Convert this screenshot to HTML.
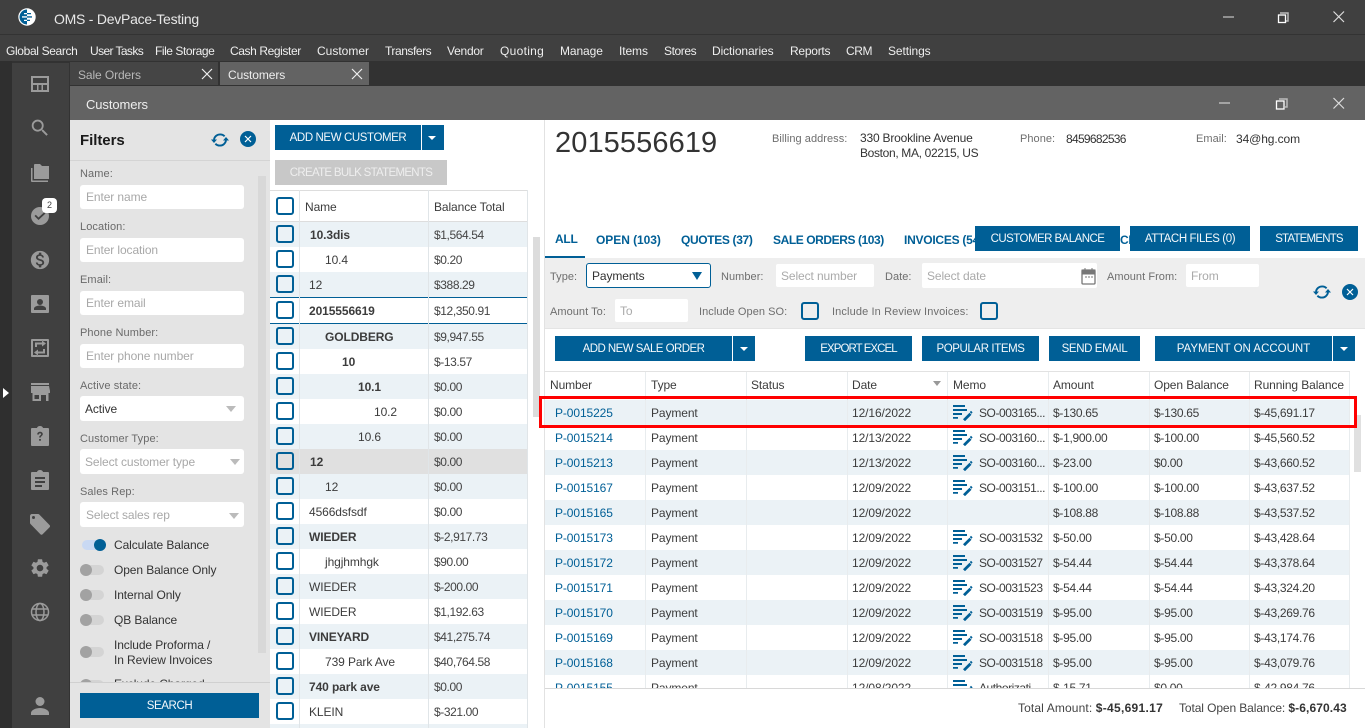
<!DOCTYPE html>
<html><head><meta charset="utf-8"><title>OMS</title>
<style>
html,body{margin:0;padding:0}
body{width:1365px;height:728px;overflow:hidden;position:relative;background:#fff;font:12px/16px "Liberation Sans",sans-serif;color:#333;letter-spacing:-.1px}
div,span,svg{position:absolute;white-space:nowrap;box-sizing:border-box}
b span,span span{position:static}
.m{top:43px;color:#eee;font-size:12px}
.btn{background:#005f96;color:#f4f8fb;text-align:center;height:25px;line-height:27px;font-size:11.5px;letter-spacing:-.4px}
.lb{left:80px;color:#6a6a6a;font-size:11px;letter-spacing:.1px}
.in{left:80px;width:164px;height:24px;background:#fff;border-radius:3px;color:#a8a8a8;line-height:24px;padding-left:6px;font-size:12px}
.tg{left:80px;width:24px;height:10px;border-radius:5px;background:#d4d4d4}
.tg i{position:absolute;left:0;top:-1px;width:12px;height:12px;border-radius:50%;background:#a2a2a2}
.tl{left:114px;color:#333}
.ar{width:0;height:0;border-left:5px solid transparent;border-right:5px solid transparent;border-top:6px solid #bbb}
.cb{left:6px;top:3px;width:18px;height:18px;border:2px solid #005f96;border-radius:3px;background:transparent}
.r{left:0;width:258px;height:25px}
.t{background:#ebf2f6}
.n{top:5px;color:#3c3c3c}
.bal{left:164px;top:5px;color:#444;letter-spacing:-.4px}
.R{left:0;width:804px;height:25px}
.R span{top:5px;color:#3c3c3c}
.R .a{left:10px;color:#005f96}.R .b{left:106px}.R .d{left:307px}.R .e{left:434px;letter-spacing:-.45px}.R .f{left:508px;letter-spacing:-.3px}.R .g{left:609px;letter-spacing:-.3px}.R .h{left:709px;letter-spacing:-.3px}
.R svg{left:408px;top:5px}
.v{top:0;width:1px;height:288px;background:#e8ecee}
.hd{top:377px;color:#3c3c3c}
.tab{top:232px;color:#005f96;font-weight:bold;font-size:12px;letter-spacing:-.25px}
.gl{color:#6e6e6e;font-size:11px;letter-spacing:.05px}
.gi{background:#fff;color:#aaa;height:23px;line-height:25px;padding-left:5px;border-radius:2px}
.ic{left:29px;width:22px;height:22px;fill:#9b9b9b}
</style></head><body>
<svg width="0" height="0" style="position:absolute"><defs>
<symbol id="memo" viewBox="0 0 20 16"><path fill="#005f96" d="M0 0h12v2H0zM0 4h14v2H0zM0 8h9v2H0zM0 12h5v1.800H0z"/><path stroke="#005f96" stroke-width="2.800" fill="none" d="M11 15.200l6.500-6.500"/><path fill="#005f96" d="M18 5.800l1.600 1.600-1.200 1.300-1.600-1.600z"/></symbol>
<symbol id="ref" viewBox="0 0 18 18"><path fill="none" stroke="#005f96" stroke-width="1.900" d="M3 8.500C3.600 5.400 6.200 3.400 9.200 3.400c1.800 0 3.300.7 4.400 1.900M15 9.500c-.6 3.100-3.200 5.100-6.200 5.100-1.800 0-3.300-.7-4.400-1.900"/><path fill="#005f96" d="M0 8.500h6L3 12zM12 9.500h6L15 6z"/></symbol>
</defs></svg>

<!-- title + menu -->
<div style="left:0;top:0;width:1365px;height:61px;background:#404040"></div>
<div style="left:0;top:34px;width:1365px;height:1px;background:#333"></div>
<svg style="left:18px;top:8px" width="18" height="18" viewBox="0 0 18 18"><circle cx="9" cy="9" r="8.700" fill="#fff"/><path d="M9 1.500A7.500 7.500 0 0 0 9 16.500z" fill="#005f96"/><path d="M7 5h6v1.300H7zM5 8.300h9v1.300H5zM7 11.700h5V13H7z" fill="#005f96"/><path d="M6 5h3v1.300H6zM4 8.300h5v1.300H4zM6 11.700h3V13H6z" fill="#fff"/></svg>
<div style="left:54px;top:11px;color:#e8e8e8;font-size:14px;letter-spacing:-.25px">OMS - DevPace-Testing</div>
<div class="m" style="left:6px;letter-spacing:-.35px">Global Search</div><div class="m" style="left:90px;letter-spacing:-.6px">User Tasks</div><div class="m" style="left:155px;letter-spacing:-.45px">File Storage</div><div class="m" style="left:230px;letter-spacing:-.4px">Cash Register</div><div class="m" style="left:317px;letter-spacing:0">Customer</div><div class="m" style="left:385px;letter-spacing:-.45px">Transfers</div><div class="m" style="left:447px;letter-spacing:-.25px">Vendor</div><div class="m" style="left:500px;letter-spacing:.3px">Quoting</div><div class="m" style="left:560px">Manage</div><div class="m" style="left:619px">Items</div><div class="m" style="left:664px;letter-spacing:-.4px">Stores</div><div class="m" style="left:712px">Dictionaries</div><div class="m" style="left:790px;letter-spacing:-.25px">Reports</div><div class="m" style="left:846px;letter-spacing:-.4px">CRM</div><div class="m" style="left:888px">Settings</div>
<svg style="left:1220px;top:8px" width="145" height="20" fill="none"><path d="M3 9h11" stroke="#aaa" stroke-width="1.500"/><path d="M60 5h8v8h-2" stroke="#bbb" stroke-width="1.500"/><rect x="58.500" y="7" width="7" height="7.500" stroke="#fff" stroke-width="1.300"/><path d="M113.500 3.500l10.500 10.500M124 3.500l-10.500 10.500" stroke="#ddd" stroke-width="1.200"/></svg>

<!-- strip -->
<div style="left:0;top:61px;width:1365px;height:25px;background:#323232"></div>
<div style="left:70px;top:62px;width:148px;height:23px;background:#454545"></div>
<div style="left:78px;top:67px;color:#b8b8b8">Sale Orders</div>
<svg style="left:201px;top:68px" width="12" height="12"><path d="M1 1l10 10M11 1L1 11" stroke="#eee" stroke-width="1.200"/></svg>
<div style="left:220px;top:62px;width:149px;height:23px;background:#636363"></div>
<div style="left:228px;top:67px;color:#eee">Customers</div>
<svg style="left:351px;top:68px" width="12" height="12"><path d="M1 1l10 10M11 1L1 11" stroke="#eee" stroke-width="1.200"/></svg>

<!-- sidebar -->
<div style="left:0;top:61px;width:12px;height:667px;background:#2f2f2f"></div>
<div style="left:12px;top:63px;width:58px;height:665px;background:#404040"></div>
<div style="left:69px;top:63px;width:1px;height:665px;background:#333"></div>
<div style="left:3px;top:388px;width:0;height:0;border-left:6px solid #fff;border-top:5px solid transparent;border-bottom:5px solid transparent"></div>
<svg class="ic" style="top:73px" viewBox="0 0 22 22"><path fill-rule="evenodd" d="M2 3h18v16H2zM4 5v5h14V5zM4 12v5h4v-5zM9.500 12v5h3v-5zM14 12v5h4v-5z"/></svg>
<svg class="ic" style="top:116px" viewBox="0 0 24 24"><path d="M15.500 14h-.79l-.28-.27A6.471 6.471 0 0 0 16 9.500 6.500 6.500 0 1 0 9.500 16c1.610 0 3.090-.59 4.230-1.570l.27.28v.79l5 4.990L20.490 19l-4.990-5zm-6 0C7.010 14 5 11.990 5 9.500S7.010 5 9.500 5 14 7.010 14 9.500 11.990 14 9.500 14z" transform="translate(0 1)"/></svg>
<svg class="ic" style="top:161px" viewBox="0 0 22 22"><path d="M6 3h5l2 2h7v13H5V4c0-.6.400-1 1-1z"/><path d="M2 7h1.500v12.500H19V21H3c-.6 0-1-.4-1-1z"/></svg>
<svg class="ic" style="top:205px" viewBox="0 0 22 22"><path fill-rule="evenodd" d="M11 2a9 9 0 1 1 0 18 9 9 0 0 1 0-18zM5.500 11l4 4 7-6.500-1.300-1.200-5.700 5.200L6.800 9.800z"/></svg>
<svg class="ic" style="top:249px" viewBox="0 0 24 24"><path d="M12 2C6.480 2 2 6.480 2 12s4.480 10 10 10 10-4.480 10-10S17.520 2 12 2zm1.410 16.090V20h-2.670v-1.930c-1.710-.36-3.160-1.460-3.270-3.400h1.960c.1 1.050.82 1.870 2.650 1.870 1.960 0 2.400-.98 2.400-1.590 0-.83-.44-1.610-2.670-2.140-2.480-.6-4.180-1.620-4.180-3.670 0-1.720 1.390-2.840 3.110-3.210V4h2.670v1.950c1.860.45 2.790 1.860 2.870 3.390H14.300c-.05-1.110-.64-1.870-2.220-1.870-1.500 0-2.400.68-2.400 1.640 0 .84.650 1.390 2.670 1.910s4.180 1.390 4.180 3.910c-.01 1.830-1.380 2.830-3.120 3.160z"/></svg>
<svg class="ic" style="top:293px" viewBox="0 0 22 22"><path fill-rule="evenodd" d="M3 2h16c.6 0 1 .4 1 1v16c0 .6-.4 1-1 1H3c-.6 0-1-.4-1-1V3c0-.6.400-1 1-1zm8 4a3 3 0 1 0 0 6 3 3 0 0 0 0-6zm-6 11h12v-1.500c0-2-4-3-6-3s-6 1-6 3z"/></svg>
<svg class="ic" style="top:337px" viewBox="0 0 22 22"><path fill-rule="evenodd" d="M3 2h16c.6 0 1 .4 1 1v16c0 .6-.4 1-1 1H3c-.6 0-1-.4-1-1V3c0-.6.400-1 1-1zm1 2v14h14V4zM6 5.500h7V3.500l4 3-4 3v-2H8V10H6zM16 16.500H9v2l-4-3 4-3v2h5V12h2z"/></svg>
<svg class="ic" style="top:381px" viewBox="0 0 22 22"><path fill-rule="evenodd" d="M2 2h18v2H2zM2 5h18l1 5v2h-1.500v8H17v-6h-5v6H3.500v-8H2v-2zM5.500 14v4H10v-4z"/></svg>
<svg class="ic" style="top:425px" viewBox="0 0 22 22"><path fill-rule="evenodd" d="M3 3h5c.3-1.200 1.500-2 3-2s2.700.8 3 2h5c.6 0 1 .4 1 1v16c0 .6-.4 1-1 1H3c-.6 0-1-.4-1-1V4c0-.6.400-1 1-1zm5.200 6.500h1.700c0-.8.500-1.300 1.100-1.300s1.100.4 1.100 1c0 1.200-2 1.200-2 3.300h1.700c0-1.500 2-1.800 2-3.400 0-1.500-1.200-2.400-2.800-2.400s-2.800 1.100-2.800 2.800zM10.100 14v1.800h1.800V14z"/></svg>
<svg class="ic" style="top:469px" viewBox="0 0 22 22"><path fill-rule="evenodd" d="M3 3h5c.3-1.200 1.500-2 3-2s2.700.8 3 2h5c.6 0 1 .4 1 1v16c0 .6-.4 1-1 1H3c-.6 0-1-.4-1-1V4c0-.6.400-1 1-1zm3 5v2h10V8zm0 4v2h10v-2zm0 4v2h7v-2z"/></svg>
<svg class="ic" style="top:513px" viewBox="0 0 22 22"><path fill-rule="evenodd" d="M1 3c0-1 .8-2 2-2h6c.5 0 1 .2 1.400.6l10.200 10.500c.6.600.6 1.600 0 2.200l-7 7c-.6.600-1.600.6-2.200 0L1.500 11c-.3-.3-.5-.8-.5-1.300zm3.500 0a1.500 1.500 0 1 0 0 3 1.500 1.500 0 0 0 0-3z"/></svg>
<svg class="ic" style="top:557px" viewBox="0 0 24 24"><path d="M19.140 12.940c.04-.3.060-.61.060-.94 0-.32-.02-.64-.07-.94l2.030-1.580c.18-.14.23-.41.120-.61l-1.920-3.320c-.12-.22-.37-.29-.59-.22l-2.390.96c-.5-.38-1.030-.7-1.620-.94l-.36-2.540c-.04-.24-.24-.41-.48-.41h-3.840c-.24 0-.43.17-.47.41l-.36 2.540c-.59.24-1.130.57-1.620.94l-2.390-.96c-.22-.08-.47 0-.59.22L2.740 8.870c-.12.21-.08.47.12.61l2.030 1.580c-.05.3-.09.63-.09.94s.02.64.07.94l-2.030 1.580c-.18.14-.23.41-.12.61l1.920 3.320c.12.22.37.29.59.22l2.390-.96c.5.38 1.030.7 1.620.94l.36 2.540c.05.24.24.41.48.41h3.840c.24 0 .44-.17.47-.41l.36-2.540c.59-.24 1.130-.56 1.620-.94l2.390.96c.22.08.47 0 .59-.22l1.920-3.320c.12-.22.07-.47-.12-.61l-2.010-1.580zM12 15.600c-1.980 0-3.600-1.620-3.600-3.600s1.620-3.600 3.600-3.600 3.600 1.620 3.600 3.600-1.620 3.600-3.600 3.600z"/></svg>
<svg class="ic" style="top:601px;fill:none;stroke:#9b9b9b;stroke-width:1.500" viewBox="0 0 22 22"><circle cx="11" cy="11" r="8.500"/><ellipse cx="11" cy="11" rx="4" ry="8.500"/><path d="M3 8h16M3 14h16"/></svg>
<svg class="ic" style="top:695px" viewBox="0 0 22 22"><circle cx="11" cy="6.500" r="4.500"/><path d="M2 20v-2c0-3 5-5 9-5s9 2 9 5v2z"/></svg>
<div style="left:42px;top:198px;width:15px;height:15px;background:#fff;border-radius:4px;color:#444;font-size:9px;line-height:15px;text-align:center">2</div>

<!-- panel title -->
<div style="left:70px;top:86px;width:1295px;height:34px;background:#636363"></div>
<div style="left:86px;top:97px;color:#eee;font-size:13px">Customers</div>
<svg style="left:1216px;top:96px" width="149" height="16" fill="none"><path d="M3 7h11" stroke="#bbb" stroke-width="1.500"/><path d="M63 3h8v8h-2" stroke="#bbb" stroke-width="1.500"/><rect x="60.500" y="5" width="7.500" height="8" stroke="#fff" stroke-width="1.300"/><path d="M117.500 2l10.500 10.500M128 2l-10.500 10.500" stroke="#ddd" stroke-width="1.200"/></svg>

<!-- filters -->
<div style="left:70px;top:120px;width:200px;height:608px;background:#e4e4e4"></div>
<div style="left:70px;top:160px;width:200px;height:1px;background:#d4d4d4"></div>
<div style="left:80px;top:133px;font-size:15px;font-weight:bold;color:#1a1a1a;letter-spacing:-.05px">Filters</div>
<svg style="left:211px;top:131px" width="18" height="18"><use href="#ref"/></svg>
<div style="left:240px;top:131px;width:16px;height:16px;border-radius:50%;background:#005f96"></div>
<svg style="left:244px;top:135px" width="8" height="8"><path d="M1 1l6 6M7 1L1 7" stroke="#fff" stroke-width="1.200"/></svg>
<div style="left:258px;top:176px;width:8px;height:477px;background:#d8d8d8"></div>
<div class="lb" style="top:166px">Name:</div><div class="in" style="top:185px">Enter name</div>
<div class="lb" style="top:219px">Location:</div><div class="in" style="top:238px">Enter location</div>
<div class="lb" style="top:272px">Email:</div><div class="in" style="top:291px">Enter email</div>
<div class="lb" style="top:325px">Phone Number:</div><div class="in" style="top:344px">Enter phone number</div>
<div class="lb" style="top:378px">Active state:</div><div class="in" style="top:396px;height:25px;line-height:27px;color:#333;padding-left:5px">Active</div><div class="ar" style="left:226px;top:406px"></div>
<div class="lb" style="top:431px">Customer Type:</div><div class="in" style="top:449px;height:25px;line-height:27px;padding-left:5px">Select customer type</div><div class="ar" style="left:230px;top:459px"></div>
<div class="lb" style="top:484px">Sales Rep:</div><div class="in" style="top:502px;height:25px;line-height:27px">Select sales rep</div><div class="ar" style="left:229px;top:513px"></div>
<div class="tg" style="top:540px;left:82px;background:#c9d9f3"><i style="left:12px;background:#005f96"></i></div><div class="tl" style="top:537px">Calculate Balance</div>
<div class="tg" style="top:565px"><i></i></div><div class="tl" style="top:562px">Open Balance Only</div>
<div class="tg" style="top:590px"><i></i></div><div class="tl" style="top:587px">Internal Only</div>
<div class="tg" style="top:615px"><i></i></div><div class="tl" style="top:612px">QB Balance</div>
<div class="tg" style="top:647px"><i></i></div><div class="tl" style="top:638px;line-height:15px">Include Proforma /<br>In Review Invoices</div>
<div class="tg" style="top:680px"><i></i></div><div class="tl" style="top:676px">Exclude Charged</div>
<div style="left:70px;top:682px;width:200px;height:46px;background:#e4e4e4;border-top:1px solid #d0d0d0"></div>
<div class="btn" style="left:80px;top:693px;width:179px">SEARCH</div>

<!-- middle -->
<div style="left:270px;top:120px;width:275px;height:608px;background:#fff"></div>
<div style="left:544px;top:120px;width:1px;height:608px;background:#e2e2e2"></div>
<div class="btn" style="left:275px;top:125px;width:146px">ADD NEW CUSTOMER</div>
<div class="btn" style="left:422px;top:125px;width:22px"></div><div class="ar" style="left:428px;top:136px;border-top-color:#fff;border-width:4px 4px 0"></div>
<div class="btn" style="left:275px;top:160px;width:172px;background:#c8c8c8;color:#eee;letter-spacing:-.7px">CREATE BULK STATEMENTS</div>
<div style="left:270px;top:190px;width:258px;height:538px">
 <div style="left:0;top:0;width:258px;height:32px;border-top:1px solid #ddd;border-bottom:1px solid #ddd"></div>
 <div class="cb" style="top:7px"></div>
 <div class="n" style="left:35px;top:9px">Name</div><div class="n" style="left:164px;top:9px">Balance Total</div>
 <div class="r t" style="top:32px"><div class="cb"></div><span class="n" style="left:40px"><b>10.3dis</b></span><span class="bal">$1,564.54</span></div>
 <div class="r" style="top:57px"><div class="cb"></div><span class="n" style="left:55px">10.4</span><span class="bal">$0.20</span></div>
 <div class="r t" style="top:82px"><div class="cb"></div><span class="n" style="left:39px">12</span><span class="bal">$388.29</span></div>
 <div class="r" style="top:107px;height:27px;border-top:1px solid #005f96;border-bottom:1px solid #005f96"><div class="cb"></div><span class="n" style="left:39px"><b>2015556619</b></span><span class="bal">$12,350.91</span></div>
 <div class="r t" style="top:134px"><div class="cb"></div><span class="n" style="left:55px"><b>GOLDBERG</b></span><span class="bal">$9,947.55</span></div>
 <div class="r" style="top:159px"><div class="cb"></div><span class="n" style="left:72px"><b>10</b></span><span class="bal">$-13.57</span></div>
 <div class="r t" style="top:184px"><div class="cb"></div><span class="n" style="left:88px"><b>10.1</b></span><span class="bal">$0.00</span></div>
 <div class="r" style="top:209px"><div class="cb"></div><span class="n" style="left:104px">10.2</span><span class="bal">$0.00</span></div>
 <div class="r t" style="top:234px"><div class="cb"></div><span class="n" style="left:88px">10.6</span><span class="bal">$0.00</span></div>
 <div class="r" style="top:259px;background:#e0e0e0"><div class="cb"></div><span class="n" style="left:40px"><b>12</b></span><span class="bal">$0.00</span></div>
 <div class="r t" style="top:284px"><div class="cb"></div><span class="n" style="left:55px">12</span><span class="bal">$0.00</span></div>
 <div class="r" style="top:309px"><div class="cb"></div><span class="n" style="left:39px">4566dsfsdf</span><span class="bal">$0.00</span></div>
 <div class="r t" style="top:334px"><div class="cb"></div><span class="n" style="left:39px"><b>WIEDER</b></span><span class="bal">$-2,917.73</span></div>
 <div class="r" style="top:359px"><div class="cb"></div><span class="n" style="left:55px">jhgjhmhgk</span><span class="bal">$90.00</span></div>
 <div class="r t" style="top:384px"><div class="cb"></div><span class="n" style="left:39px">WIEDER</span><span class="bal">$-200.00</span></div>
 <div class="r" style="top:409px"><div class="cb"></div><span class="n" style="left:39px">WIEDER</span><span class="bal">$1,192.63</span></div>
 <div class="r t" style="top:434px"><div class="cb"></div><span class="n" style="left:39px"><b>VINEYARD</b></span><span class="bal">$41,275.74</span></div>
 <div class="r" style="top:459px"><div class="cb"></div><span class="n" style="left:55px">739 Park Ave</span><span class="bal">$40,764.58</span></div>
 <div class="r t" style="top:484px"><div class="cb"></div><span class="n" style="left:39px"><b>740 park ave</b></span><span class="bal">$0.00</span></div>
 <div class="r" style="top:509px"><div class="cb"></div><span class="n" style="left:39px">KLEIN</span><span class="bal">$-321.00</span></div>
 <div class="r t" style="top:534px;height:4px"></div>
 <div style="left:29px;top:0;width:1px;height:538px;background:#e0e5e8"></div>
 <div style="left:158px;top:0;width:1px;height:538px;background:#e0e5e8"></div>
 <div style="left:257px;top:0;width:1px;height:538px;background:#e0e5e8"></div>
</div>
<div style="left:533px;top:237px;width:7px;height:180px;background:#dcdcdc"></div>

<!-- right header -->
<div style="left:555px;top:125px;font-size:29px;line-height:36px;color:#333;letter-spacing:.1px">2015556619</div>
<div class="gl" style="left:772px;top:131px">Billing address:</div>
<div style="left:860px;top:131px;line-height:15px;color:#333;letter-spacing:-.2px">330 Brookline Avenue<br><span style="position:static;letter-spacing:-.34px">Boston, MA, 02215, US</span></div>
<div class="gl" style="left:1020px;top:131px">Phone:</div><div style="left:1066px;top:131px;letter-spacing:-.7px">8459682536</div>
<div class="gl" style="left:1196px;top:131px">Email:</div><div style="left:1236px;top:131px">34@hg.com</div>

<div class="tab" style="left:555px;top:231px">ALL</div><div class="tab" style="left:596px;letter-spacing:-.05px">OPEN (103)</div><div class="tab" style="left:681px;letter-spacing:-.35px">QUOTES (37)</div><div class="tab" style="left:773px;letter-spacing:-.42px">SALE ORDERS (103)</div><div class="tab" style="left:904px">INVOICES (54)</div><div class="tab" style="left:1120px">CI</div>
<div style="left:545px;top:256px;width:40px;height:2px;background:#005f96"></div>
<div class="btn" style="left:975px;top:226px;width:145px;letter-spacing:-.55px">CUSTOMER BALANCE</div>
<div class="btn" style="left:1130px;top:226px;width:120px">ATTACH FILES (0)</div>
<div class="btn" style="left:1260px;top:226px;width:98px;letter-spacing:-.8px">STATEMENTS</div>

<!-- filter bar -->
<div style="left:545px;top:258px;width:820px;height:71px;background:#eee;border-bottom:1px solid #e4e4e4"></div>
<div class="gl" style="left:550px;top:269px">Type:</div>
<div style="left:586px;top:263px;width:125px;height:25px;background:#fff;border:1px solid #005f96;border-radius:3px;padding-left:5px;line-height:25px;color:#333">Payments</div>
<div class="ar" style="left:692px;top:272px;border-top:8px solid #005f96"></div>
<div class="gl" style="left:721px;top:269px">Number:</div><div class="gi" style="left:776px;top:264px;width:98px">Select number</div>
<div class="gl" style="left:885px;top:269px">Date:</div><div class="gi" style="left:922px;top:263px;width:175px;height:25px;line-height:27px">Select date</div>
<svg style="left:1081px;top:267px" width="15" height="18" fill="none"><rect x="1" y="3" width="13" height="14" rx="1" stroke="#777" stroke-width="1.300"/><path d="M1 3h13v4H1zM4 1v3M11 1v3" fill="#777" stroke="#777"/><path d="M4 10h2M7 10h2M10 10h2" stroke="#777"/></svg>
<div class="gl" style="left:1107px;top:269px">Amount From:</div><div class="gi" style="left:1186px;top:264px;width:73px">From</div>
<div class="gl" style="left:550px;top:304px">Amount To:</div><div class="gi" style="left:615px;top:299px;width:73px">To</div>
<div class="gl" style="left:699px;top:304px">Include Open SO:</div><div class="cb" style="left:801px;top:302px"></div>
<div class="gl" style="left:832px;top:304px;letter-spacing:.12px">Include In Review Invoices:</div><div class="cb" style="left:980px;top:302px"></div>
<svg style="left:1313px;top:283px" width="18" height="18"><use href="#ref"/></svg>
<div style="left:1342px;top:284px;width:16px;height:16px;border-radius:50%;background:#005f96"></div>
<svg style="left:1346px;top:288px" width="8" height="8"><path d="M1 1l6 6M7 1L1 7" stroke="#fff" stroke-width="1.200"/></svg>

<!-- action buttons -->
<div class="btn" style="left:555px;top:336px;width:177px;letter-spacing:-.55px">ADD NEW SALE ORDER</div>
<div class="btn" style="left:733px;top:336px;width:22px"></div><div class="ar" style="left:740px;top:347px;border-top-color:#fff;border-width:4px 4px 0"></div>
<div class="btn" style="left:805px;top:336px;width:107px;letter-spacing:-.95px">EXPORT EXCEL</div>
<div class="btn" style="left:922px;top:336px;width:117px">POPULAR ITEMS</div>
<div class="btn" style="left:1049px;top:336px;width:91px">SEND EMAIL</div>
<div class="btn" style="left:1155px;top:336px;width:177px;letter-spacing:0">PAYMENT ON ACCOUNT</div>
<div class="btn" style="left:1333px;top:336px;width:22px"></div><div class="ar" style="left:1340px;top:347px;border-top-color:#fff;border-width:4px 4px 0"></div>

<!-- grid header -->
<div style="left:545px;top:371px;width:805px;height:1px;background:#e2e2e2"></div>
<div class="hd" style="left:550px">Number</div><div class="hd" style="left:651px">Type</div><div class="hd" style="left:751px">Status</div><div class="hd" style="left:852px">Date</div><div class="ar" style="left:933px;top:381px;border-width:5px 4.500px 0;border-top-color:#999"></div><div class="hd" style="left:953px">Memo</div><div class="hd" style="left:1053px">Amount</div><div class="hd" style="left:1154px">Open Balance</div><div class="hd" style="left:1254px">Running Balance</div>

<!-- grid -->
<div style="left:545px;top:400px;width:805px;height:288px;overflow:hidden">
<div class="R t" style="top:0"><span class="a">P-0015225</span><span class="b">Payment</span><span class="d">12/16/2022</span><svg width="20" height="16"><use href="#memo"/></svg><span class="e">SO-003165...</span><span class="f">$-130.65</span><span class="g">$-130.65</span><span class="h">$-45,691.17</span></div>
<div class="R" style="top:25px"><span class="a">P-0015214</span><span class="b">Payment</span><span class="d">12/13/2022</span><svg width="20" height="16"><use href="#memo"/></svg><span class="e">SO-003160...</span><span class="f">$-1,900.00</span><span class="g">$-100.00</span><span class="h">$-45,560.52</span></div>
<div class="R t" style="top:50px"><span class="a">P-0015213</span><span class="b">Payment</span><span class="d">12/13/2022</span><svg width="20" height="16"><use href="#memo"/></svg><span class="e">SO-003160...</span><span class="f">$-23.00</span><span class="g">$0.00</span><span class="h">$-43,660.52</span></div>
<div class="R" style="top:75px"><span class="a">P-0015167</span><span class="b">Payment</span><span class="d">12/09/2022</span><svg width="20" height="16"><use href="#memo"/></svg><span class="e">SO-003151...</span><span class="f">$-100.00</span><span class="g">$-100.00</span><span class="h">$-43,637.52</span></div>
<div class="R t" style="top:100px"><span class="a">P-0015165</span><span class="b">Payment</span><span class="d">12/09/2022</span><span class="f">$-108.88</span><span class="g">$-108.88</span><span class="h">$-43,537.52</span></div>
<div class="R" style="top:125px"><span class="a">P-0015173</span><span class="b">Payment</span><span class="d">12/09/2022</span><svg width="20" height="16"><use href="#memo"/></svg><span class="e">SO-0031532</span><span class="f">$-50.00</span><span class="g">$-50.00</span><span class="h">$-43,428.64</span></div>
<div class="R t" style="top:150px"><span class="a">P-0015172</span><span class="b">Payment</span><span class="d">12/09/2022</span><svg width="20" height="16"><use href="#memo"/></svg><span class="e">SO-0031527</span><span class="f">$-54.44</span><span class="g">$-54.44</span><span class="h">$-43,378.64</span></div>
<div class="R" style="top:175px"><span class="a">P-0015171</span><span class="b">Payment</span><span class="d">12/09/2022</span><svg width="20" height="16"><use href="#memo"/></svg><span class="e">SO-0031523</span><span class="f">$-54.44</span><span class="g">$-54.44</span><span class="h">$-43,324.20</span></div>
<div class="R t" style="top:200px"><span class="a">P-0015170</span><span class="b">Payment</span><span class="d">12/09/2022</span><svg width="20" height="16"><use href="#memo"/></svg><span class="e">SO-0031519</span><span class="f">$-95.00</span><span class="g">$-95.00</span><span class="h">$-43,269.76</span></div>
<div class="R" style="top:225px"><span class="a">P-0015169</span><span class="b">Payment</span><span class="d">12/09/2022</span><svg width="20" height="16"><use href="#memo"/></svg><span class="e">SO-0031518</span><span class="f">$-95.00</span><span class="g">$-95.00</span><span class="h">$-43,174.76</span></div>
<div class="R t" style="top:250px"><span class="a">P-0015168</span><span class="b">Payment</span><span class="d">12/09/2022</span><svg width="20" height="16"><use href="#memo"/></svg><span class="e">SO-0031518</span><span class="f">$-95.00</span><span class="g">$-95.00</span><span class="h">$-43,079.76</span></div>
<div class="R" style="top:275px"><span class="a">P-0015155</span><span class="b">Payment</span><span class="d">12/08/2022</span><svg width="20" height="16"><use href="#memo"/></svg><span class="e">Authorizati</span><span class="f">$-15.71</span><span class="g">$0.00</span><span class="h">$-42,984.76</span></div>
</div>
<div class="v" style="left:645px;top:372px;height:316px"></div><div class="v" style="left:746px;top:372px;height:316px"></div><div class="v" style="left:847px;top:372px;height:316px"></div><div class="v" style="left:947px;top:372px;height:316px"></div><div class="v" style="left:1048px;top:372px;height:316px"></div><div class="v" style="left:1149px;top:372px;height:316px"></div><div class="v" style="left:1249px;top:372px;height:316px"></div><div class="v" style="left:1349px;top:372px;height:316px"></div>
<div style="left:1354px;top:415px;width:7px;height:57px;background:#e0e0e0"></div>
<div style="left:539px;top:396px;width:818px;height:32px;border:3px solid #f00"></div>

<!-- footer -->
<div style="left:545px;top:688px;width:820px;height:1px;background:#d8d8d8"></div>
<div style="left:1018px;top:700px;color:#444;letter-spacing:.12px">Total Amount: <b style="color:#333;letter-spacing:.3px">$-45,691.17</b></div>
<div style="left:1179px;top:700px;color:#444">Total Open Balance: <b style="color:#333;letter-spacing:.1px">$-6,670.43</b></div>
</body></html>
